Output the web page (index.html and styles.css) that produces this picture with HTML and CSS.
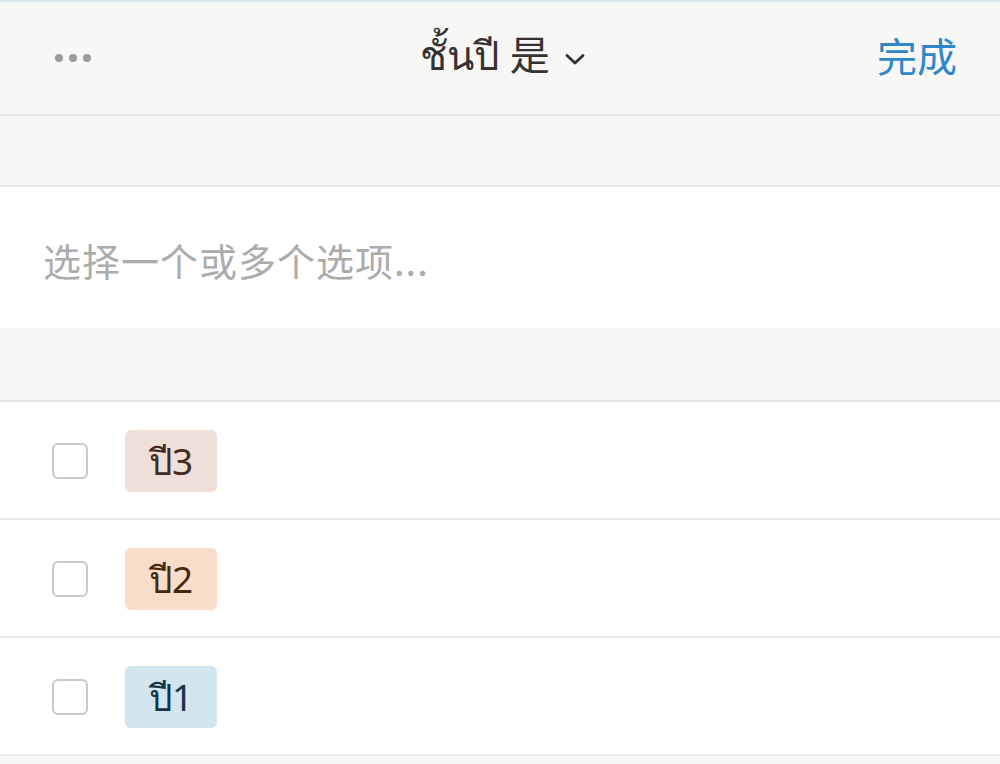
FILE: index.html
```html
<!DOCTYPE html>
<html lang="zh">
<head>
<meta charset="utf-8">
<link rel="stylesheet" href="styles.css">
</head>
<body>
<div class="topline"></div>
<header class="header">
  <div class="more"><span></span><span></span><span></span></div>
  <div class="title">ชั้นปี 是
    <svg class="chev" width="22" height="14" viewBox="0 0 22 14"><path d="M3 3.5 L11 11 L19 3.5" fill="none" stroke="#333" stroke-width="2.8" stroke-linecap="round" stroke-linejoin="round"/></svg>
  </div>
  <div class="done">完成</div>
</header>
<div class="band band-1"></div>
<div class="input"><span class="placeholder">选择一个或多个选项...</span></div>
<div class="band band-2"></div>
<ul class="options">
  <li class="option"><span class="box"></span><span class="tag tag-brown">ปี3</span></li>
  <li class="option"><span class="box"></span><span class="tag tag-orange">ปี2</span></li>
  <li class="option"><span class="box"></span><span class="tag tag-blue">ปี1</span></li>
</ul>
</body>
</html>
```
FILE: styles.css
```css
html, body {
  margin: 0;
  padding: 0;
  background: #f7f7f5;
  font-family: "Noto Sans", "Noto Sans CJK SC", sans-serif;
}
.topline {
  height: 2px;
  background: #dbe4ec;
}
.header {
  height: 112px;
  border-bottom: 2px solid #e6e6e4;
  background: #f7f7f5;
  display: flex;
  align-items: center;
  justify-content: space-between;
  padding: 0 43px 0 55px;
  position: relative;
}
.more {
  display: flex;
  gap: 6px;
  width: 36px;
}
.more span {
  width: 8px;
  height: 8px;
  border-radius: 50%;
  background: #9b9b9b;
}
.title {
  position: absolute;
  left: 0;
  right: 0;
  top: 0;
  bottom: 0;
  display: flex;
  align-items: center;
  justify-content: center;
  gap: 14px;
  font-size: 40px;
  color: #333;
  padding-left: 6px;
  margin-top: -4px;
  pointer-events: none;
}
.chev { margin-top: 6px; }
.done {
  font-size: 40px;
  color: #2f86c8;
  font-family: "Noto Sans CJK SC", sans-serif;
  position: relative;
  margin-top: -6px;
}
.band {
  background: #f7f7f5;
  border-bottom: 2px solid #e6e6e4;
}
.band-1 { height: 69px; }
.band-2 { height: 72px; }
.input {
  height: 141px;
  background: #fff;
  display: flex;
  align-items: center;
  padding-left: 43px;
}
.placeholder {
  font-size: 38px;
  letter-spacing: 1px;
  color: #acacac;
  font-family: "Noto Sans CJK SC", sans-serif;
  margin-top: 4px;
}
.options {
  list-style: none;
  margin: 0;
  padding: 0;
}
.option {
  height: 116px;
  background: #fff;
  border-bottom: 2px solid #ebebea;
  display: flex;
  align-items: center;
  padding-left: 52px;
  gap: 37px;
}
.box {
  width: 32px;
  height: 32px;
  border: 2px solid #c9c9c9;
  border-radius: 6px;
  margin-top: 2px;
}
.tag {
  width: 92px;
  height: 62px;
  border-radius: 6px;
  display: flex;
  align-items: center;
  justify-content: center;
  font-size: 37px;
  margin-top: 2px;
}
.tag-brown { background: #eee0d9; color: #442a1e; }
.tag-orange { background: #f8ddca; color: #49290e; }
.tag-blue { background: #d3e5ef; color: #183347; }
```
